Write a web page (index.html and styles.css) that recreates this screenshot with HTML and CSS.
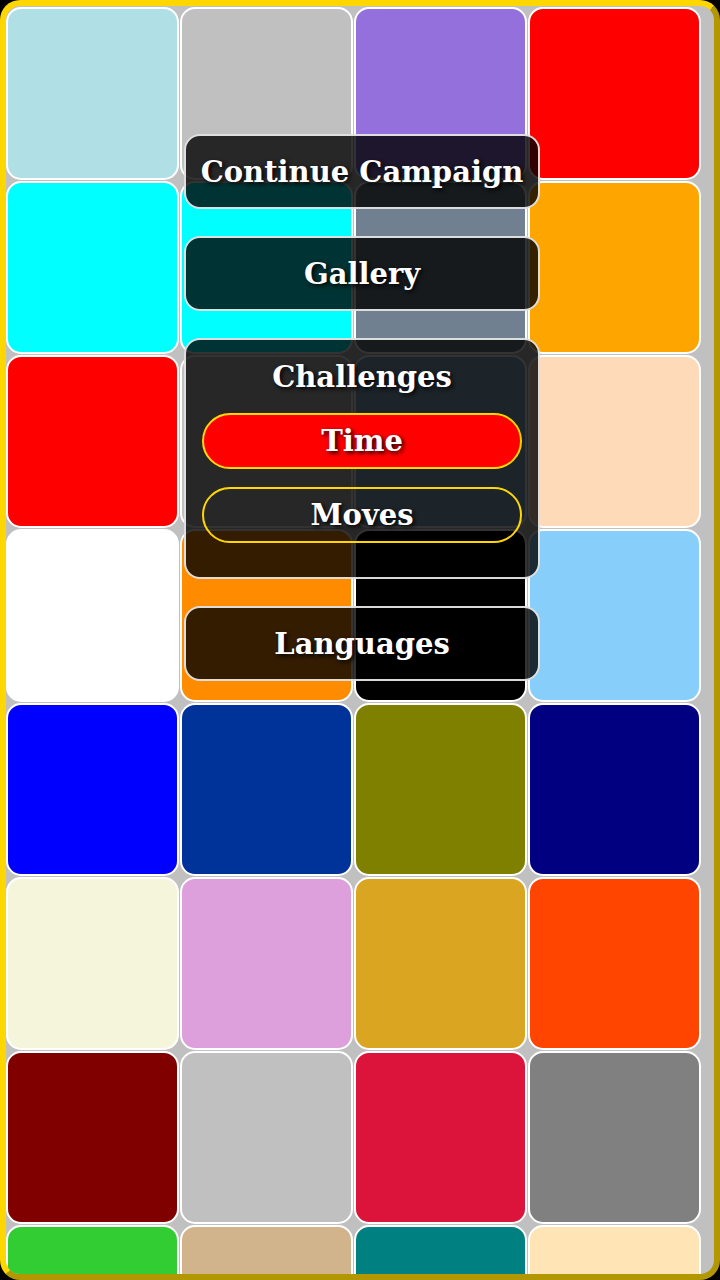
FILE: index.html
```html
<!DOCTYPE html>
<html lang="en">
<head>
    <meta charset="UTF-8">
    <meta name="viewport" content="width=device-width, initial-scale=1.0">
    <title>Colors</title>
    <link rel="stylesheet" href="styles.css">
</head>
<body>
    <div class="frame">
        <div class="board">
            <div class="tile" style="background:#b0e0e6"></div>
            <div class="tile" style="background:#c0c0c0"></div>
            <div class="tile" style="background:#9370db"></div>
            <div class="tile" style="background:#ff0000"></div>

            <div class="tile" style="background:#00ffff"></div>
            <div class="tile" style="background:#00ffff"></div>
            <div class="tile" style="background:#708090"></div>
            <div class="tile" style="background:#ffa500"></div>

            <div class="tile" style="background:#ff0000"></div>
            <div class="tile" style="background:#c0c0c0"></div>
            <div class="tile" style="background:#8cb4cd"></div>
            <div class="tile" style="background:#ffdab9"></div>

            <div class="tile" style="background:#ffffff"></div>
            <div class="tile" style="background:#ff8c00"></div>
            <div class="tile" style="background:#000000"></div>
            <div class="tile" style="background:#87cefa"></div>

            <div class="tile" style="background:#0000ff"></div>
            <div class="tile" style="background:#003399"></div>
            <div class="tile" style="background:#808000"></div>
            <div class="tile" style="background:#000080"></div>

            <div class="tile" style="background:#f5f5dc"></div>
            <div class="tile" style="background:#dda0dd"></div>
            <div class="tile" style="background:#daa520"></div>
            <div class="tile" style="background:#ff4500"></div>

            <div class="tile" style="background:#800000"></div>
            <div class="tile" style="background:#c0c0c0"></div>
            <div class="tile" style="background:#dc143c"></div>
            <div class="tile" style="background:#808080"></div>

            <div class="tile" style="background:#32cd32"></div>
            <div class="tile" style="background:#d2b48c"></div>
            <div class="tile" style="background:#008080"></div>
            <div class="tile" style="background:#ffe4b5"></div>
        </div>

        <div class="menu">
            <div class="panel">Continue Campaign</div>
            <div class="panel">Gallery</div>
            <div class="panel challenges">
                <div class="challenges-title">Challenges</div>
                <div class="mode mode-active">Time</div>
                <div class="mode">Moves</div>
            </div>
            <div class="panel">Languages</div>
        </div>
    </div>
</body>
</html>
```

FILE: styles.css
```css
html, body {
    margin: 0;
    padding: 0;
    background-color: #000;
}

body {
    width: 720px;
    height: 1280px;
    overflow: hidden;
    font-family: "DejaVu Serif", "Liberation Serif", serif;
}

.frame {
    position: relative;
    box-sizing: border-box;
    width: 720px;
    height: 1280px;
    border: 6px solid;
    border-color: #ffd700 #b39700 #b39700 #ffd700;
    border-radius: 20px;
    background-color: #c0c0c0;
    overflow: hidden;
}

.board {
    display: grid;
    grid-template-columns: repeat(4, 173px);
    grid-auto-rows: 173px;
    gap: 1px;
    padding-top: 1px;
}

.tile {
    box-sizing: border-box;
    border: 2px solid #fff;
    border-radius: 15px;
}

.menu {
    position: absolute;
    top: 128px;
    left: 178px;
    width: 356px;
    display: flex;
    flex-direction: column;
    gap: 27px;
}

.panel {
    box-sizing: border-box;
    height: 75px;
    border: 2px solid rgba(255, 255, 255, 0.85);
    border-radius: 16px;
    background-color: rgba(0, 0, 0, 0.8);
    color: #fff;
    font-size: 29px;
    font-weight: bold;
    display: flex;
    align-items: center;
    justify-content: center;
    text-shadow: 2px 2px 4px rgba(0, 0, 0, 0.95);
}

.challenges {
    height: 241px;
    flex-direction: column;
    justify-content: flex-start;
    padding: 0 16px;
}

.challenges-title {
    height: 73px;
    display: flex;
    align-items: center;
}

.mode {
    box-sizing: border-box;
    width: 100%;
    height: 56px;
    margin-bottom: 18px;
    border: 2px solid #ffd700;
    border-radius: 28px;
    display: flex;
    align-items: center;
    justify-content: center;
}

.mode-active {
    background-color: #ff0000;
}
```
